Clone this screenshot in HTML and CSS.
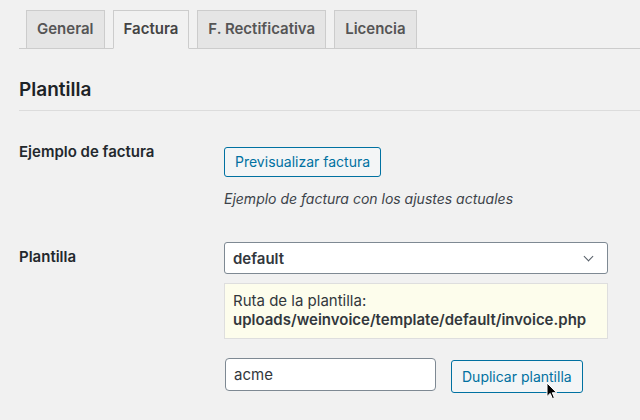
FILE: index.html
```html
<!DOCTYPE html>
<html lang="es">
<head>
<meta charset="utf-8">
<title>Ajustes de factura</title>
<link rel="stylesheet" href="styles.css">
</head>
<body>
<div class="wrap">
  <nav class="tabs">
    <a class="tab" href="#">General</a>
    <a class="tab tab-active" href="#">Factura</a>
    <a class="tab" href="#">F. Rectificativa</a>
    <a class="tab" href="#">Licencia</a>
  </nav>

  <h2 class="section-title">Plantilla</h2>

  <div class="row row-preview">
    <div class="label">Ejemplo de factura</div>
    <div class="control">
      <button class="button" type="button">Previsualizar factura</button>
      <p class="description">Ejemplo de factura con los ajustes actuales</p>
    </div>
  </div>

  <div class="row row-template">
    <div class="label">Plantilla</div>
    <div class="control">
      <div class="select-wrap">
        <select class="select">
          <option>default</option>
        </select>
      </div>
      <div class="notice">
        Ruta de la plantilla:<br>
        <strong>uploads/weinvoice/template/default/invoice.php</strong>
      </div>
      <div class="duplicate">
        <input class="text-input" type="text" value="acme">
        <span class="cursor-anchor">
          <button class="button button-dup" type="button">Duplicar plantilla</button>
          <svg class="cursor" width="12" height="18" viewBox="0 0 12 18" aria-hidden="true">
            <path d="M1 1 L1 14.5 L4.2 11.4 L6.4 16.6 L8.4 15.8 L6.3 10.7 L10.6 10.7 Z" fill="#000" stroke="#fff" stroke-width="1" stroke-linejoin="round"/>
          </svg>
        </span>
      </div>
    </div>
  </div>
</div>
</body>
</html>
```

FILE: styles.css
```css
html, body {
  margin: 0;
  padding: 0;
}

body {
  background: #f1f1f1;
  color: #23282d;
  font-family: Inter, "Noto Sans", "Liberation Sans", sans-serif;
  font-size: 14px;
  width: 640px;
  height: 420px;
  overflow: hidden;
}

.wrap {
  padding: 10px 0 0 19px;
}

/* tab strip */
.tabs {
  display: flex;
  border-bottom: 1px solid #ccc;
  padding-left: 7px;
  gap: 8px;
}

.tab {
  display: block;
  padding: 6px 10px 7px;
  line-height: 24px;
  font-size: 15px;
  font-weight: 600;
  color: #555;
  text-decoration: none;
  background: #e5e5e5;
  border: 1px solid #ccc;
  margin-bottom: -1px;
}

.tab-active {
  background: #f1f1f1;
  border-bottom-color: #f1f1f1;
  color: #444;
}

/* section heading */
.section-title {
  margin: 29px 0 0;
  padding-bottom: 8px;
  font-size: 19px;
  line-height: 24px;
  font-weight: 600;
  color: #1d2327;
  border-bottom: 1px solid #dcdcdc;
}

/* settings rows */
.row {
  display: grid;
  grid-template-columns: 205px 384px;
  align-items: start;
}

.label {
  font-size: 15px;
  font-weight: 600;
  line-height: 20px;
  color: #23282d;
}

.row-preview {
  padding-top: 31px;
}

.row-preview .control {
  padding-top: 5px;
}

.row-template {
  padding-top: 33px;
}

.row-template .label {
  margin-top: 5px;
}

.button {
  display: inline-block;
  height: 30px;
  padding: 0 10px;
  font-family: inherit;
  font-size: 14px;
  line-height: 28px;
  color: #0071a1;
  background: #f3f5f6;
  border: 1px solid #0071a1;
  border-radius: 3px;
  cursor: pointer;
}

.description {
  margin: 12px 0 0;
  font-size: 14px;
  line-height: 20px;
  font-style: italic;
  color: #3c434a;
}

.select-wrap {
  position: relative;
}

.select-wrap::after {
  content: "";
  position: absolute;
  right: 16px;
  top: 11px;
  width: 6px;
  height: 6px;
  border-right: 1.6px solid #555d66;
  border-bottom: 1.6px solid #555d66;
  transform: rotate(45deg);
  pointer-events: none;
}

.select {
  display: block;
  width: 384px;
  height: 32px;
  margin: 0;
  padding: 0 24px 0 8px;
  appearance: none;
  -webkit-appearance: none;
  background: #fff;
  border: 1px solid #7e8993;
  border-radius: 3px;
  font-family: inherit;
  font-size: 15px;
  font-weight: 600;
  color: #32373c;
}

.notice {
  margin-top: 9px;
  padding: 7px 8px 9px;
  background: #fdfdec;
  border: 1px solid #dedede;
  font-size: 15px;
  line-height: 19px;
  color: #32373c;
}

.notice strong {
  font-weight: 600;
}

.duplicate {
  display: flex;
  align-items: flex-start;
  margin-top: 19px;
}

.text-input {
  box-sizing: border-box;
  width: 211px;
  height: 33px;
  margin: 0 0 0 1px;
  padding: 0 8px;
  background: #fff;
  border: 1px solid #7e8993;
  border-radius: 4px;
  font-family: inherit;
  font-size: 15px;
  color: #32373c;
}

.cursor-anchor {
  position: relative;
  margin-left: 15px;
  margin-top: 2px;
}

.button-dup {
  display: block;
  height: 33px;
  line-height: 31px;
}

.cursor {
  position: absolute;
  left: 95px;
  top: 22px;
}
```
